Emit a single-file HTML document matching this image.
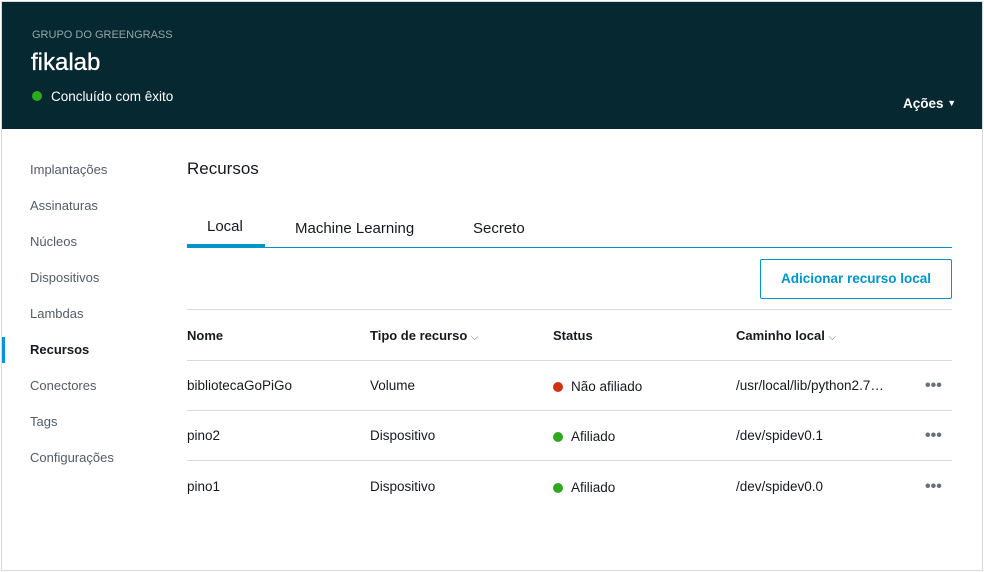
<!DOCTYPE html>
<html><head><style>
*{margin:0;padding:0;box-sizing:border-box}
body{width:984px;height:572px;background:#fff;font-family:"Liberation Sans",sans-serif;color:#16191f;position:relative;overflow:hidden}
.frame{position:absolute;left:1px;top:1px;width:982px;height:570px;border:1px solid #d5dbdb}
.hdr{position:absolute;left:2px;top:2px;width:980px;height:127px;background:#062830}
.t{position:absolute;white-space:nowrap}
.nav{font-size:13px;color:#545b64}
.th{font-size:13px;font-weight:bold;color:#16191f}
.td{font-size:13.5px;color:#16191f}
.line{position:absolute;left:187px;width:765px;height:1px;background:#d5dbdb}
.dot{display:inline-block;width:10px;height:10px;border-radius:50%;margin-right:8px;vertical-align:-1px}
.more{position:absolute;left:925px;font-size:16px;color:#687078;font-weight:bold}
</style></head><body>
<div class="frame"></div>
<div class="hdr"></div>
<div class="t" style="left:32px;top:29px;font-size:11px;color:#95a5a6">GRUPO DO GREENGRASS</div>
<div class="t" style="left:31px;top:49px;font-size:24px;color:#fff;-webkit-text-stroke:0.3px #fff">fikalab</div>
<div class="t" style="left:32px;top:89px;font-size:13.5px;color:#fff"><span class="dot" style="background:#2ea81f;margin-right:9px;vertical-align:0"></span>Concluído com êxito</div>
<div class="t" style="left:903px;top:96px;font-size:13.5px;font-weight:bold;color:#fff">Ações <span style="font-size:9px;vertical-align:2px">▼</span></div>
<div class="t nav" style="left:30px;top:162px">Implantações</div>
<div class="t nav" style="left:30px;top:198px">Assinaturas</div>
<div class="t nav" style="left:30px;top:234px">Núcleos</div>
<div class="t nav" style="left:30px;top:270px">Dispositivos</div>
<div class="t nav" style="left:30px;top:306px">Lambdas</div>
<div style="position:absolute;left:2px;top:337px;width:3px;height:26px;background:#0095d5"></div>
<div class="t nav" style="left:30px;top:342px;color:#16191f;font-weight:bold">Recursos</div>
<div class="t nav" style="left:30px;top:378px">Conectores</div>
<div class="t nav" style="left:30px;top:414px">Tags</div>
<div class="t nav" style="left:30px;top:450px">Configurações</div>
<div class="t" style="left:187px;top:159px;font-size:17px">Recursos</div>
<div class="t" style="left:207px;top:218px;font-size:15px">Local</div>
<div class="t" style="left:295px;top:220px;font-size:15px">Machine Learning</div>
<div class="t" style="left:473px;top:220px;font-size:15px">Secreto</div>
<div style="position:absolute;left:187px;top:247px;width:765px;height:1px;background:#0095c9"></div>
<div style="position:absolute;left:187px;top:244px;width:78px;height:4px;background:#0095c9"></div>
<div style="position:absolute;left:760px;top:259px;width:192px;height:40px;border:1px solid #0095c9;border-radius:2px;color:#0095c9;font-weight:bold;font-size:13.5px;text-align:center;line-height:38px">Adicionar recurso local</div>
<div class="line" style="top:309px"></div>
<div class="t th" style="left:187px;top:328px">Nome</div>
<div class="t th" style="left:370px;top:328px">Tipo de recurso <span style="font-weight:normal;color:#687078;font-size:10px">⌵</span></div>
<div class="t th" style="left:553px;top:328px">Status</div>
<div class="t th" style="left:736px;top:328px">Caminho local <span style="font-weight:normal;color:#687078;font-size:10px">⌵</span></div>
<div class="line" style="top:360px"></div>
<div class="t td" style="left:187px;top:378px">bibliotecaGoPiGo</div>
<div class="t td" style="left:370px;top:378px">Volume</div>
<div class="t td" style="left:553px;top:379px"><span class="dot" style="background:#d13212"></span>Não afiliado</div>
<div class="t td" style="left:736px;top:378px">/usr/local/lib/python2.7…</div>
<div class="t more" style="top:377px">•••</div>
<div class="line" style="top:410px"></div>
<div class="t td" style="left:187px;top:428px">pino2</div>
<div class="t td" style="left:370px;top:428px">Dispositivo</div>
<div class="t td" style="left:553px;top:429px"><span class="dot" style="background:#2ea81f"></span>Afiliado</div>
<div class="t td" style="left:736px;top:428px">/dev/spidev0.1</div>
<div class="t more" style="top:427px">•••</div>
<div class="line" style="top:460px"></div>
<div class="t td" style="left:187px;top:479px">pino1</div>
<div class="t td" style="left:370px;top:479px">Dispositivo</div>
<div class="t td" style="left:553px;top:480px"><span class="dot" style="background:#2ea81f"></span>Afiliado</div>
<div class="t td" style="left:736px;top:479px">/dev/spidev0.0</div>
<div class="t more" style="top:478px">•••</div>
</body></html>
